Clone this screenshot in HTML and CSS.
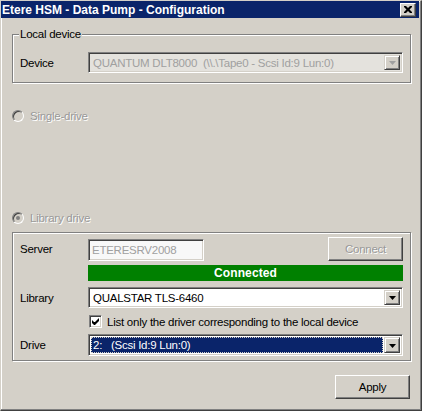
FILE: index.html
```html
<!DOCTYPE html>
<html lang="en">
<head>
    <meta charset="UTF-8">
    <title>Etere HSM - Data Pump - Configuration</title>
    <link rel="stylesheet" href="styles.css">
</head>
<body>
    <div class="window">
        <div class="titlebar">
            <div class="title">Etere HSM - Data Pump - Configuration</div>
            <div class="close-btn">
                <svg width="8" height="7" viewBox="0 0 8 7">
                    <path d="M0 0h2l2 2 2-2h2v1l-2.5 2.5 2.5 2.5v1h-2l-2-2-2 2h-2v-1l2.5-2.5-2.5-2.5z" fill="#000"/>
                </svg>
            </div>
        </div>

        <div class="content">
            <!-- Local device -->
            <fieldset class="group group-local">
                <legend>Local device</legend>
                <div class="row">
                    <label class="field-label">Device</label>
                    <div class="combo combo-disabled">
                        <span class="combo-text">QUANTUM DLT8000&nbsp;&nbsp;(\\.\Tape0 - Scsi Id:9 Lun:0)</span>
                        <span class="combo-arrow"><svg class="tri" width="7" height="4" viewBox="0 0 7 4"><path d="M0 0h7l-3.5 4z"/></svg></span>
                    </div>
                </div>
            </fieldset>

            <div class="radio-row radio-single">
                <span class="radio"></span>
                <span class="disabled-text">Single-drive</span>
            </div>

            <div class="radio-row radio-library">
                <span class="radio checked"></span>
                <span class="disabled-text">Library drive</span>
            </div>

            <!-- Library drive -->
            <div class="group group-library">
                <div class="row row-server">
                    <label class="field-label">Server</label>
                    <div class="edit">ETERESRV2008</div>
                    <div class="button button-disabled btn-connect"><span class="disabled-text">Connect</span></div>
                </div>
                <div class="status">Connected</div>
                <div class="row row-library">
                    <label class="field-label">Library</label>
                    <div class="combo">
                        <span class="combo-text">QUALSTAR TLS-6460</span>
                        <span class="combo-arrow"><svg class="tri" width="7" height="4" viewBox="0 0 7 4"><path d="M0 0h7l-3.5 4z"/></svg></span>
                    </div>
                </div>
                <div class="check-row">
                    <span class="checkbox">
                        <svg width="7" height="7" viewBox="0 0 7 7">
                            <path d="M0 2v3l2 2h1l4-4v-3l-4 4h-1z" fill="#000"/>
                        </svg>
                    </span>
                    <span>List only the driver corresponding to the local device</span>
                </div>
                <div class="row row-drive">
                    <label class="field-label">Drive</label>
                    <div class="combo">
                        <span class="combo-text selected">2:&nbsp;&nbsp;&nbsp;(Scsi Id:9 Lun:0)</span>
                        <span class="combo-arrow"><svg class="tri" width="7" height="4" viewBox="0 0 7 4"><path d="M0 0h7l-3.5 4z"/></svg></span>
                    </div>
                </div>
            </div>

            <div class="footer">
                <div class="button btn-apply">Apply</div>
            </div>
        </div>
    </div>
</body>
</html>
```

FILE: styles.css
```css
body {
    margin: 0;
    background: #d4d0c8;
    font-family: "Liberation Sans", Arial, sans-serif;
    font-size: 11.5px;
    letter-spacing: -0.25px;
    color: #000;
}

/* Window frame */
.window {
    width: 422px;
    height: 411px;
    box-sizing: border-box;
    background: #d4d0c8;
    border-top: 1px solid #d4d0c8;
    border-left: 1px solid #d4d0c8;
    border-right: 1px solid #404040;
    border-bottom: 1px solid #404040;
    padding: 0 2px 3px 0;
    box-shadow: inset -1px -1px #808080, inset 1px 1px #fff;
    display: flex;
    flex-direction: column;
}

.titlebar {
    height: 17px;
    background: #0a246a;
    color: #fff;
    display: flex;
    align-items: center;
    justify-content: space-between;
    padding: 0 3px 0 1px;
}

.title {
    font-weight: bold;
    font-size: 12px;
    letter-spacing: 0;
}

.close-btn {
    width: 16px;
    height: 14px;
    box-sizing: border-box;
    background: #d4d0c8;
    border: 1px solid;
    border-color: #fff #404040 #404040 #fff;
    box-shadow: inset -1px -1px #808080;
    display: flex;
    align-items: center;
    justify-content: center;
}

.content {
    flex: 1;
    display: flex;
    flex-direction: column;
    padding: 0 8px 0 11px;
}

/* Group boxes */
.group {
    margin: 0;
    border: 1px solid #808080;
    box-shadow: inset 1px 1px #fff, 1px 1px #fff;
}

.group-local {
    margin-top: 10px;
    padding: 11px 7px 9px 6px;
}

.group-local legend {
    padding: 0 1px;
    line-height: 13px;
    background: #d4d0c8;
}

.group-library {
    margin-top: 8px;
    padding: 4px 7px 4px 6px;
}

.row {
    display: flex;
    align-items: center;
}

.field-label {
    width: 68px;
    padding-left: 1px;
}

/* Combo boxes */
.combo {
    flex: 1;
    height: 21px;
    box-sizing: border-box;
    background: #fff;
    border: 1px solid;
    border-color: #808080 #fff #fff #808080;
    box-shadow: inset 1px 1px #404040, inset -1px -1px #d4d0c8;
    display: flex;
    align-items: stretch;
    padding: 2px;
}

.combo-text {
    flex: 1;
    display: flex;
    align-items: center;
    padding-left: 2px;
    margin-right: 1px;
    white-space: nowrap;
    overflow: hidden;
}

.combo-text.selected {
    background: #0a246a;
    color: #fff;
    outline: 1px dotted #d4d0c8;
    outline-offset: -1px;
}

.combo-arrow {
    width: 16px;
    box-sizing: border-box;
    background: #d4d0c8;
    border: 1px solid;
    border-color: #d4d0c8 #404040 #404040 #d4d0c8;
    box-shadow: inset 1px 1px #fff, inset -1px -1px #808080;
    display: flex;
    align-items: center;
    justify-content: center;
}

.tri {
    fill: #000;
    margin-top: 1px;
}

.combo-disabled {
    background: #e4e2dd;
}

.combo-disabled .combo-text {
    color: #a0a0a0;
}

.combo-disabled .tri {
    fill: #a0a0a0;
}

/* Radios */
.radio-row {
    display: flex;
    align-items: center;
    gap: 6px;
    height: 13px;
}

.radio-single {
    margin-top: 26px;
}

.radio-library {
    margin-top: 89px;
}

.radio {
    width: 12px;
    height: 12px;
    box-sizing: border-box;
    border-radius: 50%;
    border: 1px solid;
    border-color: #808080 #fff #fff #808080;
    background: #d4d0c8;
    box-shadow: inset 1px 1px #404040;
    display: flex;
    align-items: center;
    justify-content: center;
}

.radio.checked::after {
    content: "";
    width: 4px;
    height: 4px;
    border-radius: 50%;
    background: #808080;
}

.disabled-text {
    color: #999;
    text-shadow: 1px 1px #fff;
}

/* Library section */
.row-server {
    height: 24px;
}

.edit {
    width: 116px;
    height: 22px;
    box-sizing: border-box;
    background: #f8f8f8;
    border: 1px solid;
    border-color: #808080 #fff #fff #808080;
    box-shadow: inset 1px 1px #404040, inset -1px -1px #d4d0c8;
    color: #a0a0a0;
    padding: 0 3px;
    display: flex;
    align-items: center;
    margin-top: 2px;
}

.button {
    width: 75px;
    height: 24px;
    box-sizing: border-box;
    border: 1px solid;
    border-color: #fff #404040 #404040 #fff;
    box-shadow: inset -1px -1px #808080;
    display: flex;
    align-items: center;
    justify-content: center;
    background: #d4d0c8;
}

.btn-connect {
    margin-left: auto;
}

.status {
    margin: 4px 0 0 69px;
    height: 16px;
    background: #008000;
    color: #fff;
    font-weight: bold;
    font-size: 12px;
    letter-spacing: 0.1px;
    display: flex;
    align-items: center;
    justify-content: center;
}

.row-library {
    margin-top: 6px;
}

.check-row {
    display: flex;
    align-items: center;
    gap: 5px;
    margin: 7px 0 0 70px;
}

.checkbox {
    width: 13px;
    height: 13px;
    box-sizing: border-box;
    background: #fff;
    border: 1px solid;
    border-color: #808080 #fff #fff #808080;
    box-shadow: inset 1px 1px #404040, inset -1px -1px #d4d0c8;
    display: flex;
    align-items: center;
    justify-content: center;
}

.row-drive {
    margin-top: 6px;
}

.row-drive .combo {
    height: 22px;
}

.footer {
    display: flex;
    justify-content: flex-end;
    margin-top: 14px;
    padding-right: 1px;
}
```
